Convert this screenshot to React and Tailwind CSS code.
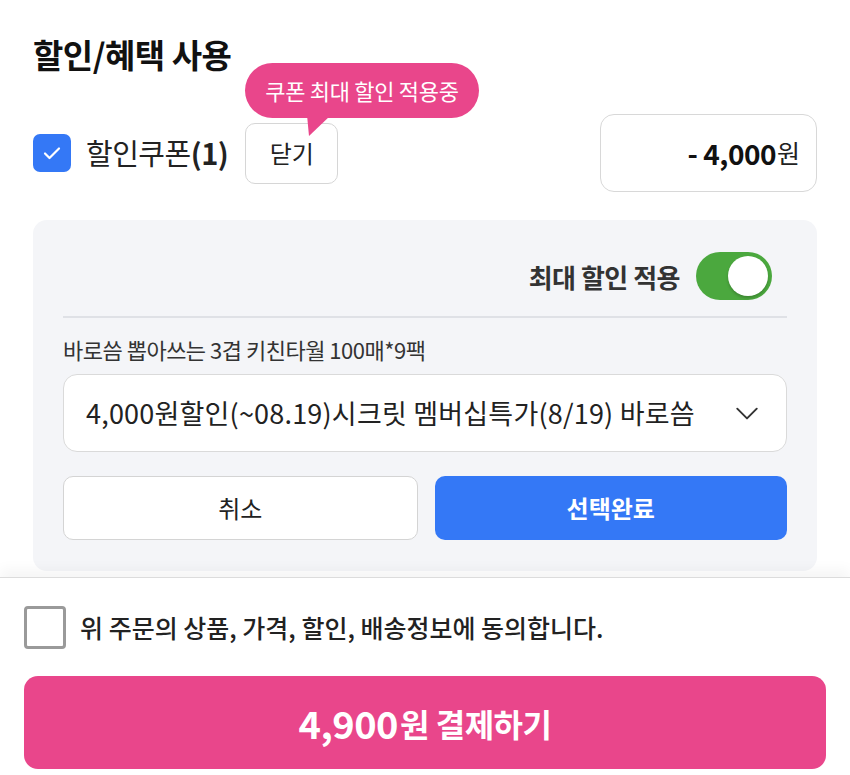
import React, { useState } from "react";

const font = { fontFamily: '"Noto Sans CJK KR", "Noto Sans", sans-serif' };

const Check = ({ className }) => (
  <svg className={className} viewBox="0 0 24 24" fill="none" stroke="currentColor" strokeWidth={2.2} strokeLinecap="round" strokeLinejoin="round">
    <path d="M5 12.5l4.5 4.5L19 7.5" />
  </svg>
);

export default function App() {
  const [maxOn, setMaxOn] = useState(true);
  const [agree, setAgree] = useState(false);

  return (
    <div style={font} className="w-[850px] h-[775px] bg-white overflow-hidden flex flex-col text-[#111]">
      {/* 할인/혜택 */}
      <div className="px-[33px] pt-[33px]">
        <h1 className="text-[33px] font-bold leading-[42px] tracking-[-0.5px]">할인/혜택 사용</h1>

        <div className="flex items-center mt-[39px] h-[78px]">
          <button className="w-[38px] h-[38px] rounded-[7px] bg-[#3478f6] flex items-center justify-center text-white">
            <Check className="w-[24px] h-[24px]" />
          </button>
          <span className="ml-[15px] text-[29px] text-[#222] tracking-[-0.5px]">
            할인쿠폰<b className="font-bold">(1)</b>
          </span>
          <div className="relative ml-[17px]">
            <button className="w-[93px] h-[61px] rounded-[10px] border border-[#d6d6d6] bg-white text-[24px] text-[#222]">닫기</button>
            <div className="absolute left-0 top-[-60px] h-[55px] px-[20px] rounded-full bg-[#e9468b] flex items-center whitespace-nowrap text-white text-[22px] tracking-[-0.3px]">
              쿠폰 최대 할인 적용중
              <svg className="absolute left-[62px] top-[52px]" width="24" height="22" viewBox="0 0 24 22">
                <path d="M0 0 L24 0 L2 21 Z" fill="#e9468b" />
              </svg>
            </div>
          </div>
          <div className="ml-auto w-[217px] h-[78px] rounded-[14px] border border-[#d8d8d8] flex items-center justify-end pr-[16px]">
            <span className="text-[28px] font-bold tracking-[-0.5px]">- 4,000</span>
            <span className="text-[25px] text-[#222] ml-[1px]">원</span>
          </div>
        </div>

        {/* 쿠폰 패널 */}
        <div className="mt-[28px] bg-[#f4f5f8] rounded-[14px] px-[30px] pt-[32px] pb-[31px]">
          <div className="flex items-center justify-end pr-[15px] gap-[16px]">
            <span className="text-[26px] font-bold text-[#333] tracking-[-0.5px]">최대 할인 적용</span>
            <button
              onClick={() => setMaxOn(v => !v)}
              className={`w-[76px] h-[48px] rounded-full p-[4px] flex items-center ${maxOn ? "bg-[#4ba83e] justify-end" : "bg-[#cfd2d8] justify-start"}`}
            >
              <span className="w-[40px] h-[40px] rounded-full bg-white shadow-[0_2px_3px_rgba(0,0,0,0.2)]" />
            </button>
          </div>
          <div className="h-[2px] bg-[#dfe1e6] mt-[16px]" />
          <p className="mt-[16px] text-[22px] text-[#333] leading-[30px] tracking-[-0.5px]">바로씀 뽑아쓰는 3겹 키친타월 100매*9팩</p>
          <div className="mt-[10px] h-[78px] bg-white rounded-[14px] border border-[#dadada] flex items-center pl-[22px] pr-[26px]">
            <span className="text-[27px] text-[#222] tracking-[0.2px] whitespace-nowrap">4,000원할인(~08.19)시크릿 멤버십특가(8/19) 바로씀</span>
            <svg className="ml-auto w-[26px] h-[26px] text-[#333]" viewBox="0 0 24 24" fill="none" stroke="currentColor" strokeWidth={1.8} strokeLinecap="round" strokeLinejoin="round">
              <path d="M3 8l9 9 9-9" />
            </svg>
          </div>
          <div className="mt-[24px] flex gap-[17px]">
            <button className="flex-1 h-[64px] rounded-[10px] bg-white border border-[#d4d4d4] text-[24px] text-[#222]">취소</button>
            <button className="flex-1 h-[64px] rounded-[10px] bg-[#3478f6] text-white text-[24px] font-bold">선택완료</button>
          </div>
        </div>
      </div>

      {/* 하단 결제 */}
      <div className="mt-[6px] flex-1 border-t border-[#dcdcdc] shadow-[0_-8px_12px_rgba(0,0,0,0.04)] px-[24px] pt-[28px]">
        <label className="flex items-center gap-[14px] cursor-pointer">
          <span
            onClick={() => setAgree(v => !v)}
            className={`w-[42px] h-[43px] rounded-[4px] border-[3px] flex items-center justify-center ${agree ? "bg-[#3478f6] border-[#3478f6] text-white" : "border-[#9a9a9a] bg-white"}`}
          >
            {agree && <Check className="w-[26px] h-[26px]" />}
          </span>
          <span className="text-[25px] font-medium text-[#222] tracking-[0px]">위 주문의 상품, 가격, 할인, 배송정보에 동의합니다.</span>
        </label>
        <button className="mt-[27px] w-full h-[93px] rounded-[14px] bg-[#e9468b] text-white flex items-center justify-center">
          <span className="text-[38px] font-bold tracking-[-0.5px]">4,900</span>
          <span className="text-[32px] font-bold ml-[2px] tracking-[-0.5px]">원 결제하기</span>
        </button>
      </div>
    </div>
  );
}
